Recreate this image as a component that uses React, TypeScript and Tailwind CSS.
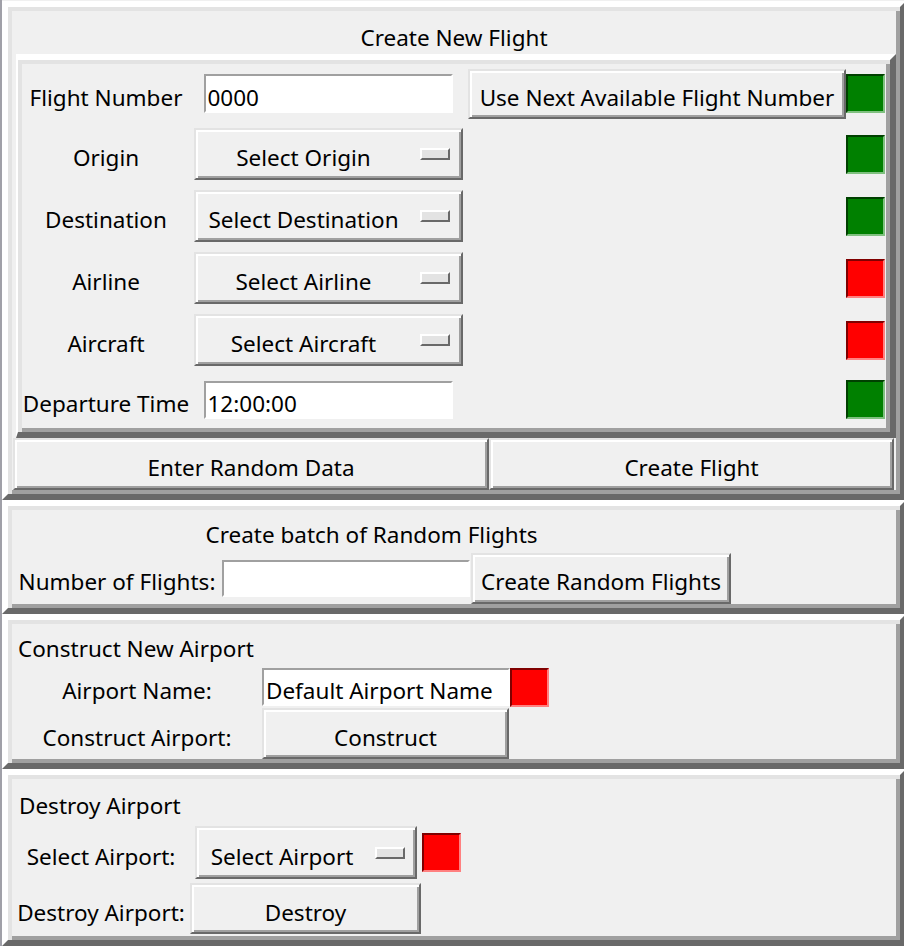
import React from 'react';

const frameCls =
  'border-[6px] border-t-white border-l-white border-r-[#696969] border-b-[#696969] shadow-[inset_4px_4px_0_#e3e3e3,inset_-4px_-4px_0_#a0a0a0] p-1 bg-[#f0f0f0]';
const btnCls =
  'border-2 border-t-[#e3e3e3] border-l-[#e3e3e3] border-r-[#696969] border-b-[#696969] shadow-[inset_2px_2px_0_#ffffff,inset_-2px_-2px_0_#a0a0a0] bg-[#f0f0f0] flex items-center';
const entryCls =
  'border-2 border-t-[#a0a0a0] border-l-[#a0a0a0] border-r-white border-b-white bg-white flex items-center px-[2px]';

// text sits a little low in the Tk widgets, padding on top pushes it down
const T = ({ children, className = '' }: { children?: React.ReactNode; className?: string }) => (
  <span className={`pt-[9px] whitespace-nowrap ${className}`}>{children}</span>
);

const Indicator = ({ ok }: { ok: boolean }) => (
  <div
    className={
      ok
        ? 'w-[39px] h-[39px] bg-[#008000] border-2 border-t-[#004000] border-l-[#004000] border-r-[#80c080] border-b-[#80c080]'
        : 'w-[39px] h-[39px] bg-[#ff0000] border-2 border-t-[#800000] border-l-[#800000] border-r-[#ff8080] border-b-[#ff8080]'
    }
  />
);

const OptionMenu = ({ text, className }: { text: string; className: string }) => (
  <div className={`${btnCls} ${className}`}>
    <T className="flex-1 text-center">{text}</T>
    <span className="ml-2 w-[30px] h-[12px] border-2 border-t-white border-l-white border-r-[#696969] border-b-[#696969] bg-[#e3e3e3]" />
  </div>
);

const Label = ({ children }: { children: React.ReactNode }) => (
  <div className="flex items-center justify-center">
    <T>{children}</T>
  </div>
);

const flightRows = [
  { label: 'Origin', option: 'Select Origin', ok: true },
  { label: 'Destination', option: 'Select Destination', ok: true },
  { label: 'Airline', option: 'Select Airline', ok: false },
  { label: 'Aircraft', option: 'Select Aircraft', ok: false },
];

export default function App() {
  return (
    <div className="w-[904px] h-[946px] overflow-hidden bg-white flex font-['Noto_Sans',sans-serif] text-[22.5px] leading-none text-black">
      <div className="w-[2px] shrink-0 bg-[#a0a0a8]" />
      <div className="w-[904px] shrink-0 flex flex-col">
        <div className="h-[2px] bg-white" />
        <div className="h-[3px] bg-[#f0f0f0]" />

        {/* Create New Flight */}
        <div className={`${frameCls} h-[499px] flex flex-col`}>
          <div className="h-[43px] flex items-center justify-center">
            <T className="pt-[12px]">Create New Flight</T>
          </div>
          <div className={`${frameCls} border-l-2 ml-1 h-[384px]`}>
            <div className="grid grid-cols-[168px_276px_380px_40px] grid-rows-[59px_62px_62px_62px_62px_57px] h-full">
              <Label>Flight Number</Label>
              <div className="flex items-center justify-center">
                <div className={`${entryCls} w-[249px] h-[39px]`}>
                  <T>0000</T>
                </div>
              </div>
              <div className="flex items-center justify-end">
                <div className={`${btnCls} justify-center w-[378px] h-[50px]`}>
                  <T>Use Next Available Flight Number</T>
                </div>
              </div>
              <div className="flex items-center">
                <Indicator ok />
              </div>

              {flightRows.map((r) => (
                <React.Fragment key={r.label}>
                  <Label>{r.label}</Label>
                  <div className="flex items-center justify-center">
                    <OptionMenu text={r.option} className="w-[269px] h-[52px] pr-[11px]" />
                  </div>
                  <div />
                  <div className="flex items-center">
                    <Indicator ok={r.ok} />
                  </div>
                </React.Fragment>
              ))}

              <Label>Departure Time</Label>
              <div className="flex items-center justify-center">
                <div className={`${entryCls} w-[249px] h-[38px]`}>
                  <T>12:00:00</T>
                </div>
              </div>
              <div />
              <div className="flex items-center">
                <Indicator ok />
              </div>
            </div>
          </div>
          <div className="h-[52px] flex">
            <div className={`${btnCls} justify-center w-[476px] ml-px`}>
              <T>Enter Random Data</T>
            </div>
            <div className={`${btnCls} justify-center flex-1 mr-[2px]`}>
              <T>Create Flight</T>
            </div>
          </div>
        </div>

        {/* Create batch of Random Flights */}
        <div className={`${frameCls} h-[114px]`}>
          <div className="grid grid-cols-[210px_249px_260px] grid-rows-[42px_52px]">
            <div className="col-span-3 flex items-center justify-center">
              <T>Create batch of Random Flights</T>
            </div>
            <Label>Number of Flights:</Label>
            <div className="flex items-center">
              <div className={`${entryCls} w-[248px] h-[37px]`} />
            </div>
            <div className="flex items-center">
              <div className={`${btnCls} justify-center w-[260px] h-[51px]`}>
                <T>Create Random Flights</T>
              </div>
            </div>
          </div>
        </div>

        {/* Construct New Airport */}
        <div className={`${frameCls} h-[155px]`}>
          <div className="grid grid-cols-[250px_248px_39px] grid-rows-[42px_42px_51px]">
            <div className="col-span-3 flex items-center pl-[6px]">
              <T>Construct New Airport</T>
            </div>
            <Label>Airport Name:</Label>
            <div className="flex items-center">
              <div className={`${entryCls} w-[248px] h-[38px]`}>
                <T>Default Airport Name</T>
              </div>
            </div>
            <div className="flex items-center">
              <Indicator ok={false} />
            </div>
            <Label>Construct Airport:</Label>
            <div className="flex items-center">
              <div className={`${btnCls} justify-center w-[247px] h-[51px]`}>
                <T>Construct</T>
              </div>
            </div>
            <div />
          </div>
        </div>

        {/* Destroy Airport */}
        <div className={`${frameCls} h-[177px]`}>
          <div className="grid grid-cols-[178px_232px_39px] grid-rows-[45px_57px_55px]">
            <div className="col-span-3 flex items-center pl-[7px]">
              <T>Destroy Airport</T>
            </div>
            <Label>Select Airport:</Label>
            <div className="flex items-center justify-center">
              <OptionMenu text="Select Airport" className="w-[222px] h-[53px] pr-[10px]" />
            </div>
            <div className="flex items-center">
              <Indicator ok={false} />
            </div>
            <Label>Destroy Airport:</Label>
            <div className="flex items-center">
              <div className={`${btnCls} justify-center w-[231px] h-[51px]`}>
                <T>Destroy</T>
              </div>
            </div>
            <div />
          </div>
        </div>
      </div>
    </div>
  );
}
